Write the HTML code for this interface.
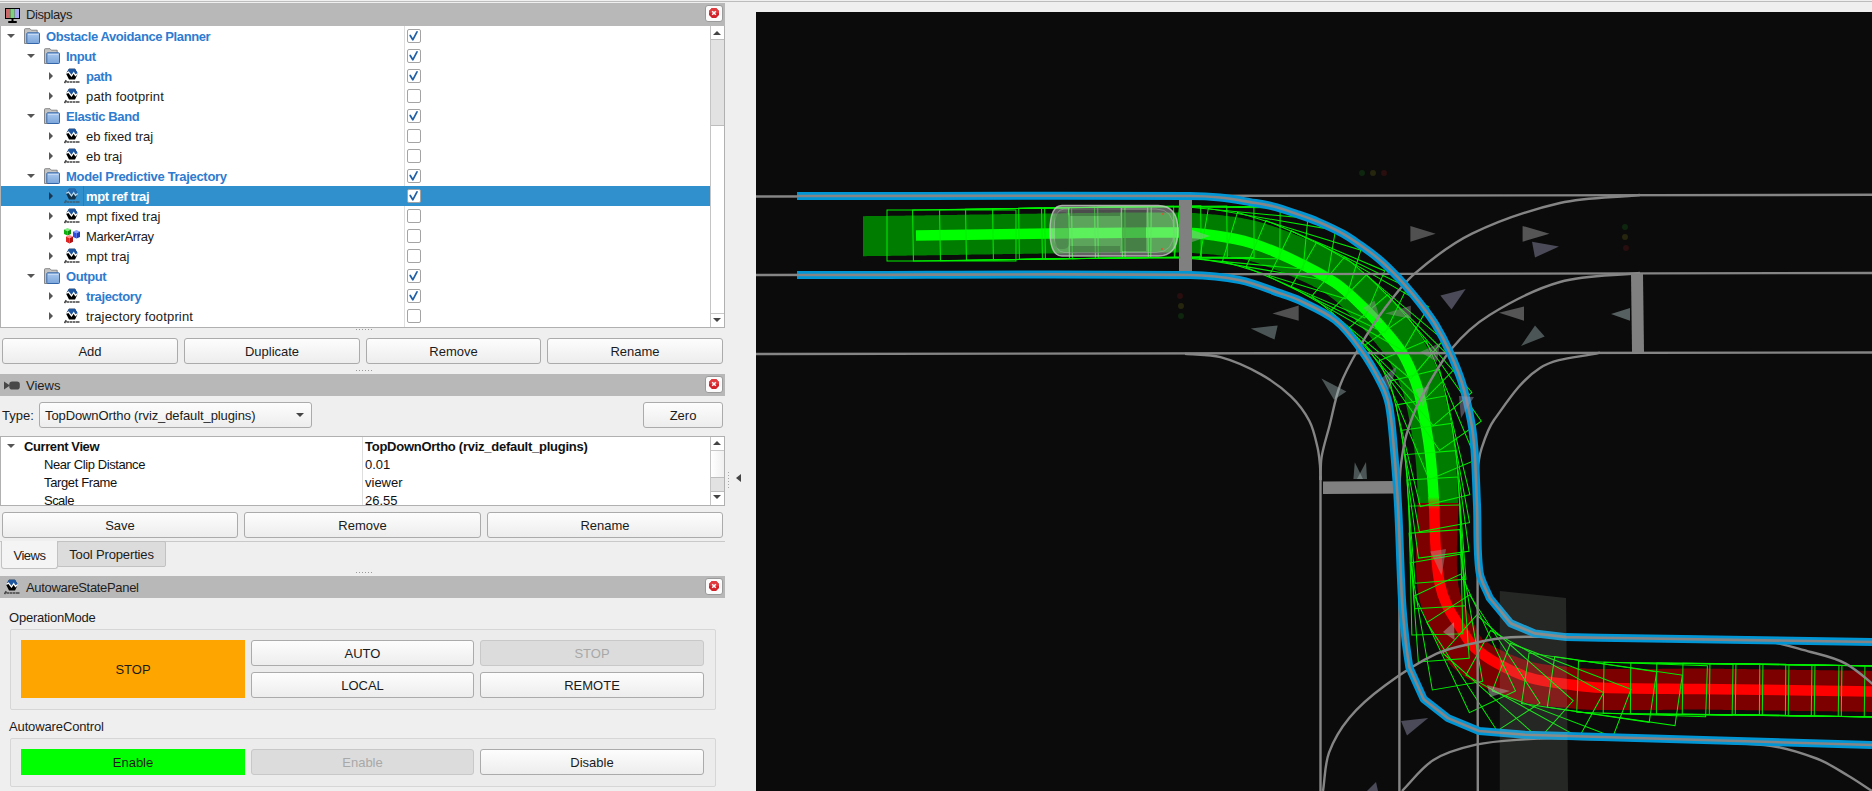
<!DOCTYPE html><html><head><meta charset="utf-8"><style>
*{margin:0;padding:0;box-sizing:border-box}
html,body{width:1872px;height:791px;overflow:hidden;background:#efefef;font-family:"Liberation Sans", sans-serif;font-size:13px;color:#1b1b1b}
.a{position:absolute}
.tb{position:absolute;left:0;width:725px;height:22px;background:#b8b8b8}
.tb .t{position:absolute;left:26px;top:4px;font-size:13px;line-height:16px;color:#1e1e1e}
.cl{position:absolute;left:705px;top:3px;width:18px;height:17px;background:#fbfbfb;border:1px solid #9a9a9a;border-radius:3px}
.btn{position:absolute;height:26px;border:1px solid #ababab;border-radius:3px;background:linear-gradient(#fdfdfd,#ededed);text-align:center;line-height:26px;font-size:13px;color:#1b1b1b}
.dis{background:#dcdcdc;color:#a8a8a8;border-color:#c8c8c8}
.row{position:absolute;left:1px;width:709px;height:20px;line-height:20px;white-space:nowrap}
.b{font-weight:bold;letter-spacing:-0.4px}
.bl{color:#2e7bcf}
.cb{position:absolute;left:407px;width:14px;height:14px;border:1px solid #a4a4a4;border-radius:2px;background:#fff}
.dots{position:absolute;height:1px;width:16px;background:repeating-linear-gradient(90deg,#9a9a9a 0 1px,transparent 1px 3px)}
</style></head><body>
<svg width="0" height="0" style="position:absolute">
<defs>
<symbol id="aw" viewBox="0 0 16 18">
 <polygon points="5,2.8 11,2.8 13.8,7.8 11,13.4 5,13.4 2.1,7.8" fill="#000"/>
 <polygon points="5,2.8 11,2.8 13.8,7.6 11.5,9.3 9.7,6.5 7.5,9.8 4.5,5.8 2.1,7.2" fill="#1f56a0"/>
 <polyline points="2.3,7.4 4.5,6 7.5,10 9.7,6.7 11.5,9.5 13.8,7.6" fill="none" stroke="#fff" stroke-width="1.3"/>
 <path d="M0.5,17 L2.3,14.3 M2.5,16 h2.5 M5.5,16 h2.5 M8.5,16 h3 M12,16 h3.5" stroke="#444" stroke-width="1.6"/>
</symbol>
<symbol id="fold" viewBox="0 0 16 16">
 <linearGradient id="fg" x1="0" y1="0" x2="0" y2="1"><stop offset="0" stop-color="#a9c8ee"/><stop offset="1" stop-color="#7ba5da"/></linearGradient>
 <path d="M0.5,15.5 V1.5 Q0.5,0.7 1.3,0.7 H6 L7.3,2.2 H13.2 V15.5 Z" fill="#c4c4c4" stroke="#7d7d7d" stroke-width="0.9"/>
 <rect x="2.8" y="4.8" width="12.7" height="10.7" rx="0.8" fill="url(#fg)" stroke="#3465a8" stroke-width="1"/>
 <rect x="4" y="6" width="10.3" height="1" fill="#d2e2f6" opacity="0.7"/>
</symbol>
<symbol id="chk" viewBox="0 0 14 14">
 <path d="M3.2,6.5 L5.8,10.8 L10,2.8" fill="none" stroke="#1e5fa8" stroke-width="1.7" stroke-linecap="round" stroke-linejoin="round"/>
</symbol>
<symbol id="xx" viewBox="0 0 16 15">
 <polygon points="5.9,2 10.1,2 13,4.9 13,9.1 10.1,12 5.9,12 3,9.1 3,4.9" fill="#d3232a"/>
 <polygon points="5.9,2 10.1,2 13,4.9 13,7 3,7 3,4.9" fill="#e03c40"/>
 <path d="M6.2,5.2 L9.8,8.8 M9.8,5.2 L6.2,8.8" stroke="#fff" stroke-width="1.5"/>
</symbol>
<symbol id="mk" viewBox="0 0 16 18">
 <g id="cube">
 </g>
 <polygon points="3.5,2 7,3.6 3.5,5.2 0,3.6" fill="#7ef07e"/><polygon points="0,3.6 3.5,5.2 3.5,9.6 0,8" fill="#10b010"/><polygon points="3.5,5.2 7,3.6 7,8 3.5,9.6" fill="#0a900a"/>
 <polygon points="12.5,4 16,5.6 12.5,7.2 9,5.6" fill="#8aa0ff"/><polygon points="9,5.6 12.5,7.2 12.5,12.6 9,11" fill="#2a4ee8"/><polygon points="12.5,7.2 16,5.6 16,11 12.5,12.6" fill="#1a3ac0"/>
 <polygon points="5.5,9 9,10.6 5.5,12.2 2,10.6" fill="#ff8a8a"/><polygon points="2,10.6 5.5,12.2 5.5,17.4 2,15.8" fill="#e02424"/><polygon points="5.5,12.2 9,10.6 9,15.8 5.5,17.4" fill="#b01010"/>
</symbol>
</defs></svg>
<div class="a" style="left:0;top:1px;width:1872px;height:1px;background:#bcbcbc"></div><div class="tb" style="top:3px;height:23px"><svg class="a" style="left:4px;top:4px" width="17" height="17" viewBox="0 0 17 17"><rect x="1" y="1" width="15" height="11" fill="#000"/><rect x="2" y="2" width="4.3" height="9" fill="#c86868"/><rect x="6.3" y="2" width="4.4" height="9" fill="#7fcf7f"/><rect x="10.7" y="2" width="4.3" height="9" fill="#a8a8f0"/><rect x="7.5" y="12" width="2" height="2" fill="#000"/><rect x="4" y="14" width="9" height="2" rx="1" fill="#000"/></svg><div class="t"><span style="letter-spacing:-0.39px">Displays</span></div><div class="cl" style="top:2px"><svg width="16" height="15" style="position:absolute;left:0;top:0"><use href="#xx"/></svg></div></div><div class="a" style="left:0;top:26px;width:725px;height:302px;background:#fff;border:1px solid #b0b0b0;border-top:none"></div><div class="a" style="left:404px;top:26px;width:1px;height:301px;background:#dedede"></div><svg class="a" style="left:6px;top:33px" width="10" height="6"><polygon points="1,1 9,1 5,5" fill="#555"/></svg><svg class="a" style="left:24px;top:28px" width="16" height="16"><use href="#fold"/></svg><div class="a b bl" style="left:46px;top:27px;line-height:20px;white-space:nowrap;">Obstacle Avoidance Planner</div><div class="cb" style="top:29px"></div><svg class="a" style="left:407px;top:29px" width="14" height="14"><use href="#chk"/></svg><svg class="a" style="left:26px;top:53px" width="10" height="6"><polygon points="1,1 9,1 5,5" fill="#555"/></svg><svg class="a" style="left:44px;top:48px" width="16" height="16"><use href="#fold"/></svg><div class="a b bl" style="left:66px;top:47px;line-height:20px;white-space:nowrap;">Input</div><div class="cb" style="top:49px"></div><svg class="a" style="left:407px;top:49px" width="14" height="14"><use href="#chk"/></svg><svg class="a" style="left:48px;top:71px" width="6" height="10"><polygon points="1,1 5,5 1,9" fill="#555"/></svg><svg class="a" style="left:64px;top:66px" width="16" height="18"><use href="#aw"/></svg><div class="a b bl" style="left:86px;top:67px;line-height:20px;white-space:nowrap;">path</div><div class="cb" style="top:69px"></div><svg class="a" style="left:407px;top:69px" width="14" height="14"><use href="#chk"/></svg><svg class="a" style="left:48px;top:91px" width="6" height="10"><polygon points="1,1 5,5 1,9" fill="#555"/></svg><svg class="a" style="left:64px;top:86px" width="16" height="18"><use href="#aw"/></svg><div class="a " style="left:86px;top:87px;line-height:20px;white-space:nowrap;"><span style="letter-spacing:0.15px">path footprint</span></div><div class="cb" style="top:89px"></div><svg class="a" style="left:26px;top:113px" width="10" height="6"><polygon points="1,1 9,1 5,5" fill="#555"/></svg><svg class="a" style="left:44px;top:108px" width="16" height="16"><use href="#fold"/></svg><div class="a b bl" style="left:66px;top:107px;line-height:20px;white-space:nowrap;">Elastic Band</div><div class="cb" style="top:109px"></div><svg class="a" style="left:407px;top:109px" width="14" height="14"><use href="#chk"/></svg><svg class="a" style="left:48px;top:131px" width="6" height="10"><polygon points="1,1 5,5 1,9" fill="#555"/></svg><svg class="a" style="left:64px;top:126px" width="16" height="18"><use href="#aw"/></svg><div class="a " style="left:86px;top:127px;line-height:20px;white-space:nowrap;">eb fixed traj</div><div class="cb" style="top:129px"></div><svg class="a" style="left:48px;top:151px" width="6" height="10"><polygon points="1,1 5,5 1,9" fill="#555"/></svg><svg class="a" style="left:64px;top:146px" width="16" height="18"><use href="#aw"/></svg><div class="a " style="left:86px;top:147px;line-height:20px;white-space:nowrap;">eb traj</div><div class="cb" style="top:149px"></div><svg class="a" style="left:26px;top:173px" width="10" height="6"><polygon points="1,1 9,1 5,5" fill="#555"/></svg><svg class="a" style="left:44px;top:168px" width="16" height="16"><use href="#fold"/></svg><div class="a b bl" style="left:66px;top:167px;line-height:20px;white-space:nowrap;"><span style="letter-spacing:-0.31px">Model Predictive Trajectory</span></div><div class="cb" style="top:169px"></div><svg class="a" style="left:407px;top:169px" width="14" height="14"><use href="#chk"/></svg><div class="a" style="left:1px;top:186px;width:709px;height:20px;background:#3090ce"></div><div class="a" style="left:83px;top:186px;width:1px;height:20px;background:#2c7cb6"></div><svg class="a" style="left:48px;top:191px" width="6" height="10"><polygon points="1,1 5,5 1,9" fill="#1a3550"/></svg><svg class="a" style="left:64px;top:186px" width="16" height="18"><use href="#aw"/></svg><div class="a b" style="left:86px;top:187px;line-height:20px;white-space:nowrap;color:#fff;">mpt ref traj</div><div class="a" style="left:64px;top:186px;width:16px;height:18px;background:#3090ce;opacity:0.35"></div><div class="cb" style="top:189px"></div><svg class="a" style="left:407px;top:189px" width="14" height="14"><use href="#chk"/></svg><svg class="a" style="left:48px;top:211px" width="6" height="10"><polygon points="1,1 5,5 1,9" fill="#555"/></svg><svg class="a" style="left:64px;top:206px" width="16" height="18"><use href="#aw"/></svg><div class="a " style="left:86px;top:207px;line-height:20px;white-space:nowrap;">mpt fixed traj</div><div class="cb" style="top:209px"></div><svg class="a" style="left:48px;top:231px" width="6" height="10"><polygon points="1,1 5,5 1,9" fill="#555"/></svg><svg class="a" style="left:64px;top:226px" width="16" height="18"><use href="#mk"/></svg><div class="a " style="left:86px;top:227px;line-height:20px;white-space:nowrap;"><span style="letter-spacing:-0.34px">MarkerArray</span></div><div class="cb" style="top:229px"></div><svg class="a" style="left:48px;top:251px" width="6" height="10"><polygon points="1,1 5,5 1,9" fill="#555"/></svg><svg class="a" style="left:64px;top:246px" width="16" height="18"><use href="#aw"/></svg><div class="a " style="left:86px;top:247px;line-height:20px;white-space:nowrap;">mpt traj</div><div class="cb" style="top:249px"></div><svg class="a" style="left:26px;top:273px" width="10" height="6"><polygon points="1,1 9,1 5,5" fill="#555"/></svg><svg class="a" style="left:44px;top:268px" width="16" height="16"><use href="#fold"/></svg><div class="a b bl" style="left:66px;top:267px;line-height:20px;white-space:nowrap;">Output</div><div class="cb" style="top:269px"></div><svg class="a" style="left:407px;top:269px" width="14" height="14"><use href="#chk"/></svg><svg class="a" style="left:48px;top:291px" width="6" height="10"><polygon points="1,1 5,5 1,9" fill="#555"/></svg><svg class="a" style="left:64px;top:286px" width="16" height="18"><use href="#aw"/></svg><div class="a b bl" style="left:86px;top:287px;line-height:20px;white-space:nowrap;">trajectory</div><div class="cb" style="top:289px"></div><svg class="a" style="left:407px;top:289px" width="14" height="14"><use href="#chk"/></svg><svg class="a" style="left:48px;top:311px" width="6" height="10"><polygon points="1,1 5,5 1,9" fill="#555"/></svg><svg class="a" style="left:64px;top:306px" width="16" height="18"><use href="#aw"/></svg><div class="a " style="left:86px;top:307px;line-height:20px;white-space:nowrap;"><span style="letter-spacing:0.15px">trajectory footprint</span></div><div class="cb" style="top:309px"></div><div class="a" style="left:710px;top:26px;width:15px;height:301px;background:#fff;border-left:1px solid #c4c4c4;border-right:1px solid #b0b0b0"></div><div class="a" style="left:711px;top:39px;width:13px;height:87px;background:#e2e2e2;border-top:1px solid #bdbdbd;border-bottom:1px solid #bdbdbd"></div><div class="a" style="left:711px;top:313px;width:13px;height:1px;background:#c8c8c8"></div><svg class="a" style="left:712px;top:30px" width="10" height="6"><polygon points="1,5 9,5 5,1" fill="#444"/></svg><svg class="a" style="left:712px;top:317px" width="10" height="6"><polygon points="1,1 9,1 5,5" fill="#444"/></svg><div class="dots" style="left:356px;top:329px"></div><div class="btn" style="left:2px;top:338px;width:176px">Add</div><div class="btn" style="left:184px;top:338px;width:176px">Duplicate</div><div class="btn" style="left:366px;top:338px;width:175px">Remove</div><div class="btn" style="left:547px;top:338px;width:176px">Rename</div><div class="dots" style="left:356px;top:370px"></div><div class="tb" style="top:374px"><svg class="a" style="left:4px;top:7px" width="17" height="11" viewBox="0 0 17 11"><polygon points="0,0.5 6,4.5 0,8.5" fill="#484848"/><rect x="5.3" y="0.5" width="10.5" height="8" rx="2.8" fill="#484848"/></svg><div class="t">Views</div><div class="cl" style="top:2px"><svg width="16" height="15" style="position:absolute;left:0;top:0"><use href="#xx"/></svg></div></div><div class="a" style="left:2px;top:407px;line-height:18px">Type:</div><div class="btn" style="left:39px;top:402px;width:273px;height:26px;text-align:left;padding-left:5px;line-height:26px"><span style="letter-spacing:-0.1px">TopDownOrtho (rviz_default_plugins)</span></div><svg class="a" style="left:295px;top:412px" width="10" height="6"><polygon points="1,1 9,1 5,5" fill="#444"/></svg><div class="btn" style="left:643px;top:402px;width:80px;height:26px">Zero</div><div class="a" style="left:0;top:436px;width:725px;height:70px;background:#fff;border:1px solid #b0b0b0"></div><div class="a" style="left:362px;top:437px;width:1px;height:68px;background:#dedede"></div><svg class="a" style="left:6px;top:443px" width="10" height="6"><polygon points="1,1 9,1 5,5" fill="#555"/></svg><div class="a" style="left:1px;top:437px;width:709px;height:68px;overflow:hidden"><div class="a b" style="left:23px;top:1px;line-height:18px;white-space:nowrap;color:#111">Current View</div><div class="a b" style="left:364px;top:1px;line-height:18px;white-space:nowrap;color:#111"><span style="letter-spacing:-0.26px">TopDownOrtho (rviz_default_plugins)</span></div><div class="a " style="left:43px;top:19px;line-height:18px;white-space:nowrap;color:#111"><span style="letter-spacing:-0.41px">Near Clip Distance</span></div><div class="a " style="left:364px;top:19px;line-height:18px;white-space:nowrap;color:#111">0.01</div><div class="a " style="left:43px;top:37px;line-height:18px;white-space:nowrap;color:#111"><span style="letter-spacing:-0.37px">Target Frame</span></div><div class="a " style="left:364px;top:37px;line-height:18px;white-space:nowrap;color:#111">viewer</div><div class="a " style="left:43px;top:55px;line-height:18px;white-space:nowrap;color:#111"><span style="letter-spacing:-0.54px">Scale</span></div><div class="a " style="left:364px;top:55px;line-height:18px;white-space:nowrap;color:#111">26.55</div></div><div class="a" style="left:710px;top:437px;width:15px;height:68px;background:#fff;border-left:1px solid #c4c4c4;border-right:1px solid #b0b0b0"></div><div class="a" style="left:711px;top:450px;width:13px;height:1px;background:#c8c8c8"></div><div class="a" style="left:711px;top:451px;width:13px;height:26px;background:linear-gradient(90deg,#fff,#f0f0f0)"></div><div class="a" style="left:711px;top:477px;width:13px;height:15px;background:#e2e2e2;border-top:1px solid #bdbdbd;border-bottom:1px solid #bdbdbd"></div><svg class="a" style="left:712px;top:440px" width="10" height="6"><polygon points="1,5 9,5 5,1" fill="#444"/></svg><svg class="a" style="left:712px;top:494px" width="10" height="6"><polygon points="1,1 9,1 5,5" fill="#444"/></svg><div class="btn" style="left:2px;top:512px;width:236px">Save</div><div class="btn" style="left:244px;top:512px;width:237px">Remove</div><div class="btn" style="left:487px;top:512px;width:236px">Rename</div><div class="a" style="left:0;top:541px;width:725px;height:1px;background:#c9c9c9"></div><div class="a" style="left:57px;top:541px;width:109px;height:26px;background:#dcdcdc;border:1px solid #c2c2c2;border-radius:2px;text-align:center;line-height:26px"><span style="letter-spacing:-0.14px">Tool Properties</span></div><div class="a" style="left:1px;top:541px;width:57px;height:28px;background:#f4f4f4;border:1px solid #c2c2c2;border-top:none;border-radius:0 0 3px 3px;text-align:center;line-height:30px"><span style="letter-spacing:-0.52px">Views</span></div><div class="dots" style="left:356px;top:572px"></div><div class="tb" style="top:576px"><svg class="a" style="left:4px;top:1px" width="16" height="18"><use href="#aw"/></svg><div class="t"><span style="letter-spacing:-0.33px">AutowareStatePanel</span></div><div class="cl" style="top:2px"><svg width="16" height="15" style="position:absolute;left:0;top:0"><use href="#xx"/></svg></div></div><div class="a" style="left:9px;top:609px;line-height:18px"><span style="letter-spacing:-0.23px">OperationMode</span></div><div class="a" style="left:10px;top:629px;width:706px;height:81px;border:1px solid #d6d6d6;border-radius:2px;background:#ececec"></div><div class="a" style="left:21px;top:640px;width:224px;height:58px;background:#ffa500;text-align:center;line-height:60px">STOP</div><div class="btn" style="left:251px;top:640px;width:223px;height:26px">AUTO</div><div class="btn dis" style="left:480px;top:640px;width:224px;height:26px">STOP</div><div class="btn" style="left:251px;top:672px;width:223px;height:26px">LOCAL</div><div class="btn" style="left:480px;top:672px;width:224px;height:26px">REMOTE</div><div class="a" style="left:9px;top:718px;line-height:18px"><span style="letter-spacing:-0.13px">AutowareControl</span></div><div class="a" style="left:10px;top:738px;width:706px;height:49px;border:1px solid #d6d6d6;border-radius:2px;background:#ececec"></div><div class="a" style="left:21px;top:749px;width:224px;height:26px;background:#00ff00;text-align:center;line-height:28px">Enable</div><div class="btn dis" style="left:251px;top:749px;width:223px;height:26px">Enable</div><div class="btn" style="left:480px;top:749px;width:224px;height:26px">Disable</div><svg class="a" style="left:735px;top:473px" width="8" height="10"><polygon points="6,1 6,9 1,5" fill="#444"/></svg><div class="a" style="left:728px;top:472px;width:1px;height:16px;background:repeating-linear-gradient(#a8a8a8 0 1px,transparent 1px 3px)"></div><svg class="a" style="left:756px;top:12px" width="1116" height="779" viewBox="756 12 1116 779"><defs><clipPath id="cg"><rect x="756" y="12" width="1116" height="491"/></clipPath><clipPath id="crd"><rect x="756" y="503" width="1116" height="300"/></clipPath></defs><defs><linearGradient id="grd" gradientUnits="userSpaceOnUse" x1="0" y1="497" x2="0" y2="509"><stop offset="0" stop-color="#00ff00"/><stop offset="1" stop-color="#ff0000"/></linearGradient><clipPath id="cmid"><rect x="1380" y="497" width="100" height="12"/></clipPath></defs><rect x="756" y="12" width="1116" height="779" fill="#0b0b0b"/><circle cx="1362" cy="173" r="3" fill="#0e260e"/><circle cx="1373" cy="173" r="3" fill="#26260e"/><circle cx="1384" cy="173" r="3" fill="#280e0e"/><circle cx="1180" cy="296" r="3" fill="#280e0e"/><circle cx="1181" cy="306" r="3" fill="#26260e"/><circle cx="1181" cy="316" r="3" fill="#0e260e"/><circle cx="1625" cy="227" r="3" fill="#0e260e"/><circle cx="1625" cy="237" r="3" fill="#26260e"/><circle cx="1626" cy="248" r="3" fill="#280e0e"/><path d="M863.0,236.2 L865.0,236.2 L867.0,236.1 L869.0,236.1 L871.0,236.1 L873.0,236.1 L875.0,236.0 L877.0,236.0 L879.0,236.0 L881.0,236.0 L883.0,235.9 L885.0,235.9 L887.0,235.9 L889.0,235.9 L891.0,235.8 L893.0,235.8 L895.0,235.8 L897.0,235.8 L899.0,235.7 L901.0,235.7 L903.0,235.7 L905.0,235.7 L907.0,235.6 L909.0,235.6 L911.0,235.6 L913.0,235.5 L915.0,235.5 L917.0,235.5 L919.0,235.5 L921.0,235.4 L923.0,235.4 L925.0,235.4 L927.0,235.3 L929.0,235.3 L931.0,235.3 L933.0,235.2 L935.0,235.2 L937.0,235.2 L939.0,235.2 L941.0,235.1 L943.0,235.1 L945.0,235.1 L947.0,235.0 L949.0,235.0 L951.0,235.0 L953.0,234.9 L955.0,234.9 L957.0,234.9 L959.0,234.8 L961.0,234.8 L963.0,234.8 L965.0,234.7 L967.0,234.7 L969.0,234.7 L971.0,234.6 L973.0,234.6 L975.0,234.6 L977.0,234.5 L979.0,234.5 L981.0,234.5 L983.0,234.4 L985.0,234.4 L987.0,234.4 L989.0,234.4 L991.0,234.3 L993.0,234.3 L995.0,234.3 L997.0,234.2 L999.0,234.2 L1001.0,234.2 L1003.0,234.1 L1005.0,234.1 L1007.0,234.1 L1009.0,234.0 L1011.0,234.0 L1013.0,234.0 L1015.0,234.0 L1017.0,233.9 L1019.0,233.9 L1021.0,233.9 L1023.0,233.8 L1025.0,233.8 L1027.0,233.8 L1029.0,233.8 L1031.0,233.7 L1033.0,233.7 L1035.0,233.7 L1037.0,233.7 L1039.0,233.6 L1041.0,233.6 L1043.0,233.6 L1045.0,233.6 L1047.0,233.5 L1049.0,233.5 L1051.0,233.5 L1053.0,233.5 L1055.0,233.4 L1057.0,233.4 L1059.0,233.4 L1061.0,233.4 L1063.0,233.3 L1065.0,233.3 L1067.0,233.3 L1069.0,233.3 L1071.0,233.2 L1073.0,233.2 L1075.0,233.2 L1077.0,233.1 L1079.0,233.1 L1081.0,233.1 L1083.0,233.1 L1085.0,233.0 L1087.0,233.0 L1089.0,233.0 L1091.0,232.9 L1093.0,232.9 L1095.0,232.9 L1097.0,232.9 L1099.0,232.8 L1101.0,232.8 L1103.0,232.8 L1105.0,232.7 L1107.0,232.7 L1109.0,232.7 L1111.0,232.7 L1113.0,232.6 L1115.0,232.6 L1117.0,232.6 L1119.0,232.6 L1121.0,232.6 L1123.0,232.5 L1125.0,232.5 L1127.0,232.5 L1129.0,232.5 L1131.0,232.5 L1133.0,232.4 L1135.0,232.4 L1137.0,232.4 L1139.0,232.4 L1141.0,232.4 L1143.0,232.4 L1145.0,232.4 L1147.0,232.4 L1149.0,232.4 L1151.0,232.4 L1153.0,232.4 L1155.0,232.4 L1157.0,232.4 L1159.0,232.4 L1161.0,232.4 L1163.0,232.4 L1165.0,232.4 L1167.0,232.4 L1169.0,232.4 L1171.0,232.4 L1173.0,232.4 L1175.0,232.4 L1177.0,232.5 L1179.0,232.5 L1181.0,232.5 L1183.0,232.6 L1185.0,232.6 L1187.0,232.7 L1189.0,232.8 L1191.0,232.9 L1193.0,233.0 L1195.0,233.2 L1196.9,233.4 L1198.9,233.5 L1200.9,233.6 L1202.9,233.8 L1204.9,233.9 L1206.9,234.0 L1208.9,234.2 L1210.9,234.4 L1212.9,234.5 L1214.9,234.7 L1216.9,234.9 L1218.9,235.1 L1220.9,235.4 L1222.9,235.6 L1224.9,235.8 L1226.9,236.1 L1228.9,236.3 L1230.9,236.6 L1232.9,236.9 L1234.9,237.2 L1236.9,237.5 L1238.8,237.9 L1240.8,238.3 L1242.8,238.6 L1244.8,239.1 L1246.8,239.5 L1248.8,240.0 L1250.7,240.4 L1252.7,241.0 L1254.7,241.5 L1256.6,242.0 L1258.5,242.6 L1260.5,243.2 L1262.4,243.8 L1264.4,244.4 L1266.3,245.0 L1268.2,245.7 L1270.1,246.3 L1272.0,247.0 L1273.9,247.7 L1275.8,248.4 L1277.7,249.1 L1279.6,249.8 L1281.5,250.5 L1283.4,251.3 L1285.3,252.0 L1287.1,252.8 L1289.0,253.5 L1290.9,254.3 L1292.7,255.1 L1294.6,255.9 L1296.4,256.7 L1298.3,257.5 L1300.1,258.2 L1302.0,259.0 L1303.8,259.9 L1305.7,260.7 L1307.5,261.5 L1309.4,262.3 L1311.2,263.2 L1313.0,264.0 L1314.9,264.9 L1316.7,265.7 L1318.5,266.6 L1320.4,267.5 L1322.2,268.4 L1324.0,269.4 L1325.9,270.3 L1327.7,271.2 L1329.5,272.2 L1331.2,273.3 L1333.0,274.4 L1334.7,275.5 L1336.4,276.6 L1338.1,277.8 L1339.9,279.0 L1341.5,280.2 L1343.2,281.5 L1344.9,282.8 L1346.6,284.1 L1348.1,285.4 L1349.7,286.8 L1351.3,288.2 L1352.8,289.5 L1354.3,291.0 L1355.8,292.4 L1357.2,293.8 L1358.7,295.2 L1360.1,296.6 L1361.6,298.0 L1363.0,299.4 L1364.4,300.8 L1365.8,302.3 L1367.3,303.7 L1368.7,305.1 L1370.1,306.6 L1371.5,308.1 L1372.9,309.6 L1374.3,311.1 L1375.7,312.6 L1377.1,314.1 L1378.4,315.6 L1379.8,317.1 L1381.1,318.6 L1382.4,320.2 L1383.7,321.7 L1385.0,323.2 L1386.3,324.8 L1387.6,326.3 L1388.9,327.9 L1390.2,329.4 L1391.5,331.0 L1392.8,332.5 L1394.0,334.1 L1395.3,335.7 L1396.6,337.2 L1397.9,338.9 L1399.1,340.5 L1400.3,342.1 L1401.5,343.8 L1402.8,345.5 L1403.9,347.3 L1405.1,349.0 L1406.2,350.8 L1407.2,352.6 L1408.3,354.4 L1409.3,356.2 L1410.3,358.1 L1411.2,359.9 L1412.1,361.8 L1413.0,363.6 L1413.9,365.5 L1414.7,367.4 L1415.5,369.3 L1416.3,371.1 L1417.1,373.0 L1417.8,374.9 L1418.6,376.8 L1419.3,378.7 L1420.0,380.6 L1420.7,382.6 L1421.4,384.5 L1422.1,386.5 L1422.7,388.5 L1423.2,390.4 L1423.8,392.4 L1424.3,394.4 L1424.8,396.4 L1425.3,398.4 L1425.7,400.5 L1426.1,402.4 L1426.6,404.4 L1427.0,406.4 L1427.4,408.3 L1427.8,410.3 L1428.2,412.3 L1428.6,414.2 L1428.9,416.2 L1429.3,418.2 L1429.7,420.2 L1430.1,422.2 L1430.4,424.1 L1430.8,426.1 L1431.2,428.1 L1431.5,430.1 L1431.9,432.1 L1432.2,434.1 L1432.5,436.0 L1432.9,438.0 L1433.2,440.0 L1433.5,442.0 L1433.8,444.0 L1434.1,446.0 L1434.4,448.0 L1434.6,450.0 L1434.9,452.0 L1435.2,454.0 L1435.4,456.1 L1435.6,458.1 L1435.7,460.1 L1435.9,462.1 L1436.1,464.1 L1436.2,466.1 L1436.4,468.1 L1436.5,470.2 L1436.6,472.2 L1436.7,474.2 L1436.9,476.2 L1437.0,478.2 L1437.1,480.2 L1437.2,482.2 L1437.3,484.2 L1437.4,486.2 L1437.4,488.2 L1437.5,490.2 L1437.6,492.2 L1437.7,494.2 L1437.8,496.2 L1437.8,498.2 L1437.9,500.2 L1438.0,502.2 L1438.1,504.3 L1438.0,506.3 L1438.0,508.3 L1437.9,510.3 L1437.8,512.4 L1437.7,514.4 L1437.6,516.4 L1437.5,518.4 L1437.4,520.4 L1437.3,522.4 L1437.2,524.4 L1437.1,526.4 L1437.0,528.4 L1436.9,530.4 L1436.8,532.4 L1436.7,534.4 L1436.6,536.4 L1436.6,538.4 L1436.5,540.4 L1436.5,542.4 L1436.5,544.4 L1436.4,546.4 L1436.4,548.4 L1436.4,550.4 L1436.4,552.4 L1436.4,554.4 L1436.4,556.4 L1436.4,558.4 L1436.4,560.4 L1436.4,562.4 L1436.4,564.5 L1436.4,566.5 L1436.5,568.5 L1436.6,570.5 L1436.7,572.5 L1436.8,574.5 L1436.9,576.5 L1437.0,578.6 L1437.2,580.6 L1437.4,582.6 L1437.6,584.6 L1437.9,586.7 L1438.2,588.7 L1438.5,590.8 L1438.9,592.8 L1439.4,594.8 L1439.8,596.8 L1440.4,598.9 L1440.9,600.9 L1441.5,602.9 L1442.2,604.8 L1442.9,606.8 L1443.6,608.8 L1444.4,610.8 L1445.3,612.7 L1446.1,614.6 L1447.0,616.5 L1447.9,618.4 L1448.9,620.2 L1449.9,622.1 L1450.8,623.9 L1451.8,625.6 L1452.7,627.4 L1453.7,629.2 L1454.6,630.9 L1455.5,632.6 L1456.3,634.3 L1457.1,636.0 L1458.0,637.8 L1458.9,639.7 L1459.8,641.6 L1460.8,643.6 L1461.9,645.5 L1463.2,647.5 L1464.5,649.5 L1466.0,651.4 L1467.7,653.4 L1469.4,654.8 L1471.1,656.1 L1472.9,657.4 L1474.7,658.7 L1476.5,659.9 L1478.3,661.1 L1480.1,662.2 L1482.0,663.3 L1483.8,664.4 L1485.7,665.4 L1487.5,666.4 L1489.5,667.4 L1491.3,668.3 L1493.2,669.2 L1495.1,670.1 L1497.0,670.9 L1498.9,671.8 L1500.7,672.6 L1502.6,673.4 L1504.5,674.2 L1506.4,675.0 L1508.4,675.7 L1510.3,676.5 L1512.2,677.2 L1514.2,677.9 L1516.1,678.6 L1518.1,679.2 L1520.1,679.8 L1522.1,680.4 L1524.1,681.0 L1526.0,681.6 L1528.1,682.1 L1530.1,682.6 L1532.1,683.1 L1534.2,683.5 L1536.3,683.9 L1538.3,684.3 L1540.3,684.6 L1542.4,684.9 L1544.4,685.2 L1546.4,685.4 L1548.5,685.6 L1550.5,685.8 L1552.5,686.0 L1554.5,686.2 L1556.5,686.3 L1558.5,686.5 L1560.5,686.7 L1562.5,686.8 L1564.4,687.0 L1566.4,687.2 L1568.4,687.4 L1570.4,687.7 L1572.4,687.9 L1574.4,688.1 L1576.4,688.3 L1578.4,688.5 L1580.4,688.7 L1582.4,688.8 L1584.4,689.0 L1586.4,689.1 L1588.5,689.2 L1590.5,689.3 L1592.5,689.4 L1594.6,689.4 L1596.6,689.4 L1598.6,689.5 L1600.6,689.5 L1602.6,689.5 L1604.6,689.5 L1606.6,689.6 L1608.6,689.6 L1610.6,689.6 L1612.6,689.6 L1614.6,689.6 L1616.6,689.6 L1618.6,689.6 L1620.6,689.6 L1622.6,689.6 L1624.6,689.6 L1626.6,689.6 L1628.6,689.6 L1630.6,689.6 L1632.6,689.6 L1634.6,689.6 L1636.6,689.6 L1638.6,689.6 L1640.6,689.6 L1642.6,689.5 L1644.6,689.5 L1646.6,689.5 L1648.6,689.5 L1650.6,689.5 L1652.6,689.5 L1654.6,689.4 L1656.6,689.4 L1658.6,689.4 L1660.6,689.4 L1662.6,689.3 L1664.6,689.3 L1666.6,689.3 L1668.6,689.3 L1670.6,689.3 L1672.6,689.2 L1674.6,689.2 L1676.6,689.2 L1678.6,689.2 L1680.6,689.2 L1682.6,689.1 L1684.6,689.1 L1686.6,689.1 L1688.6,689.1 L1690.6,689.1 L1692.6,689.1 L1694.6,689.0 L1696.6,689.0 L1698.6,689.0 L1700.6,689.0 L1702.6,689.0 L1704.6,689.1 L1706.6,689.1 L1708.6,689.1 L1710.6,689.2 L1712.6,689.2 L1714.6,689.2 L1716.6,689.2 L1718.6,689.3 L1720.6,689.3 L1722.6,689.3 L1724.6,689.4 L1726.6,689.4 L1728.6,689.4 L1730.6,689.4 L1732.6,689.5 L1734.6,689.5 L1736.6,689.5 L1738.6,689.5 L1740.6,689.6 L1742.6,689.6 L1744.6,689.6 L1746.6,689.7 L1748.6,689.7 L1750.6,689.7 L1752.6,689.7 L1754.6,689.8 L1756.6,689.8 L1758.6,689.8 L1760.6,689.9 L1762.6,689.9 L1764.6,689.9 L1766.6,689.9 L1768.6,690.0 L1770.6,690.0 L1772.6,690.0 L1774.6,690.0 L1776.6,690.1 L1778.6,690.1 L1780.6,690.1 L1782.6,690.2 L1784.6,690.2 L1786.6,690.2 L1788.6,690.2 L1790.6,690.3 L1792.6,690.3 L1794.6,690.3 L1796.6,690.4 L1798.6,690.4 L1800.6,690.4 L1802.6,690.4 L1804.6,690.5 L1806.6,690.5 L1808.6,690.5 L1810.6,690.5 L1812.6,690.6 L1814.6,690.6 L1816.6,690.6 L1818.6,690.7 L1820.6,690.7 L1822.6,690.7 L1824.6,690.7 L1826.6,690.8 L1828.6,690.8 L1830.6,690.8 L1832.6,690.8 L1834.6,690.9 L1836.6,690.9 L1838.6,690.9 L1840.6,691.0 L1842.6,691.0 L1844.6,691.0 L1846.6,691.0 L1848.6,691.1 L1850.6,691.1 L1852.6,691.1 L1854.6,691.1 L1856.6,691.2 L1858.6,691.2 L1860.6,691.2 L1862.6,691.3 L1864.6,691.3 L1866.6,691.3 L1868.6,691.3 L1870.6,691.4 L1872.6,691.4 L1874.6,691.4 L1876.6,691.5 L1878.6,691.5" fill="none" stroke="#007d00" stroke-width="40" clip-path="url(#cg)"/><path d="M863.0,236.2 L865.0,236.2 L867.0,236.1 L869.0,236.1 L871.0,236.1 L873.0,236.1 L875.0,236.0 L877.0,236.0 L879.0,236.0 L881.0,236.0 L883.0,235.9 L885.0,235.9 L887.0,235.9 L889.0,235.9 L891.0,235.8 L893.0,235.8 L895.0,235.8 L897.0,235.8 L899.0,235.7 L901.0,235.7 L903.0,235.7 L905.0,235.7 L907.0,235.6 L909.0,235.6 L911.0,235.6 L913.0,235.5 L915.0,235.5 L917.0,235.5 L919.0,235.5 L921.0,235.4 L923.0,235.4 L925.0,235.4 L927.0,235.3 L929.0,235.3 L931.0,235.3 L933.0,235.2 L935.0,235.2 L937.0,235.2 L939.0,235.2 L941.0,235.1 L943.0,235.1 L945.0,235.1 L947.0,235.0 L949.0,235.0 L951.0,235.0 L953.0,234.9 L955.0,234.9 L957.0,234.9 L959.0,234.8 L961.0,234.8 L963.0,234.8 L965.0,234.7 L967.0,234.7 L969.0,234.7 L971.0,234.6 L973.0,234.6 L975.0,234.6 L977.0,234.5 L979.0,234.5 L981.0,234.5 L983.0,234.4 L985.0,234.4 L987.0,234.4 L989.0,234.4 L991.0,234.3 L993.0,234.3 L995.0,234.3 L997.0,234.2 L999.0,234.2 L1001.0,234.2 L1003.0,234.1 L1005.0,234.1 L1007.0,234.1 L1009.0,234.0 L1011.0,234.0 L1013.0,234.0 L1015.0,234.0 L1017.0,233.9 L1019.0,233.9 L1021.0,233.9 L1023.0,233.8 L1025.0,233.8 L1027.0,233.8 L1029.0,233.8 L1031.0,233.7 L1033.0,233.7 L1035.0,233.7 L1037.0,233.7 L1039.0,233.6 L1041.0,233.6 L1043.0,233.6 L1045.0,233.6 L1047.0,233.5 L1049.0,233.5 L1051.0,233.5 L1053.0,233.5 L1055.0,233.4 L1057.0,233.4 L1059.0,233.4 L1061.0,233.4 L1063.0,233.3 L1065.0,233.3 L1067.0,233.3 L1069.0,233.3 L1071.0,233.2 L1073.0,233.2 L1075.0,233.2 L1077.0,233.1 L1079.0,233.1 L1081.0,233.1 L1083.0,233.1 L1085.0,233.0 L1087.0,233.0 L1089.0,233.0 L1091.0,232.9 L1093.0,232.9 L1095.0,232.9 L1097.0,232.9 L1099.0,232.8 L1101.0,232.8 L1103.0,232.8 L1105.0,232.7 L1107.0,232.7 L1109.0,232.7 L1111.0,232.7 L1113.0,232.6 L1115.0,232.6 L1117.0,232.6 L1119.0,232.6 L1121.0,232.6 L1123.0,232.5 L1125.0,232.5 L1127.0,232.5 L1129.0,232.5 L1131.0,232.5 L1133.0,232.4 L1135.0,232.4 L1137.0,232.4 L1139.0,232.4 L1141.0,232.4 L1143.0,232.4 L1145.0,232.4 L1147.0,232.4 L1149.0,232.4 L1151.0,232.4 L1153.0,232.4 L1155.0,232.4 L1157.0,232.4 L1159.0,232.4 L1161.0,232.4 L1163.0,232.4 L1165.0,232.4 L1167.0,232.4 L1169.0,232.4 L1171.0,232.4 L1173.0,232.4 L1175.0,232.4 L1177.0,232.5 L1179.0,232.5 L1181.0,232.5 L1183.0,232.6 L1185.0,232.6 L1187.0,232.7 L1189.0,232.8 L1191.0,232.9 L1193.0,233.0 L1195.0,233.2 L1196.9,233.4 L1198.9,233.5 L1200.9,233.6 L1202.9,233.8 L1204.9,233.9 L1206.9,234.0 L1208.9,234.2 L1210.9,234.4 L1212.9,234.5 L1214.9,234.7 L1216.9,234.9 L1218.9,235.1 L1220.9,235.4 L1222.9,235.6 L1224.9,235.8 L1226.9,236.1 L1228.9,236.3 L1230.9,236.6 L1232.9,236.9 L1234.9,237.2 L1236.9,237.5 L1238.8,237.9 L1240.8,238.3 L1242.8,238.6 L1244.8,239.1 L1246.8,239.5 L1248.8,240.0 L1250.7,240.4 L1252.7,241.0 L1254.7,241.5 L1256.6,242.0 L1258.5,242.6 L1260.5,243.2 L1262.4,243.8 L1264.4,244.4 L1266.3,245.0 L1268.2,245.7 L1270.1,246.3 L1272.0,247.0 L1273.9,247.7 L1275.8,248.4 L1277.7,249.1 L1279.6,249.8 L1281.5,250.5 L1283.4,251.3 L1285.3,252.0 L1287.1,252.8 L1289.0,253.5 L1290.9,254.3 L1292.7,255.1 L1294.6,255.9 L1296.4,256.7 L1298.3,257.5 L1300.1,258.2 L1302.0,259.0 L1303.8,259.9 L1305.7,260.7 L1307.5,261.5 L1309.4,262.3 L1311.2,263.2 L1313.0,264.0 L1314.9,264.9 L1316.7,265.7 L1318.5,266.6 L1320.4,267.5 L1322.2,268.4 L1324.0,269.4 L1325.9,270.3 L1327.7,271.2 L1329.5,272.2 L1331.2,273.3 L1333.0,274.4 L1334.7,275.5 L1336.4,276.6 L1338.1,277.8 L1339.9,279.0 L1341.5,280.2 L1343.2,281.5 L1344.9,282.8 L1346.6,284.1 L1348.1,285.4 L1349.7,286.8 L1351.3,288.2 L1352.8,289.5 L1354.3,291.0 L1355.8,292.4 L1357.2,293.8 L1358.7,295.2 L1360.1,296.6 L1361.6,298.0 L1363.0,299.4 L1364.4,300.8 L1365.8,302.3 L1367.3,303.7 L1368.7,305.1 L1370.1,306.6 L1371.5,308.1 L1372.9,309.6 L1374.3,311.1 L1375.7,312.6 L1377.1,314.1 L1378.4,315.6 L1379.8,317.1 L1381.1,318.6 L1382.4,320.2 L1383.7,321.7 L1385.0,323.2 L1386.3,324.8 L1387.6,326.3 L1388.9,327.9 L1390.2,329.4 L1391.5,331.0 L1392.8,332.5 L1394.0,334.1 L1395.3,335.7 L1396.6,337.2 L1397.9,338.9 L1399.1,340.5 L1400.3,342.1 L1401.5,343.8 L1402.8,345.5 L1403.9,347.3 L1405.1,349.0 L1406.2,350.8 L1407.2,352.6 L1408.3,354.4 L1409.3,356.2 L1410.3,358.1 L1411.2,359.9 L1412.1,361.8 L1413.0,363.6 L1413.9,365.5 L1414.7,367.4 L1415.5,369.3 L1416.3,371.1 L1417.1,373.0 L1417.8,374.9 L1418.6,376.8 L1419.3,378.7 L1420.0,380.6 L1420.7,382.6 L1421.4,384.5 L1422.1,386.5 L1422.7,388.5 L1423.2,390.4 L1423.8,392.4 L1424.3,394.4 L1424.8,396.4 L1425.3,398.4 L1425.7,400.5 L1426.1,402.4 L1426.6,404.4 L1427.0,406.4 L1427.4,408.3 L1427.8,410.3 L1428.2,412.3 L1428.6,414.2 L1428.9,416.2 L1429.3,418.2 L1429.7,420.2 L1430.1,422.2 L1430.4,424.1 L1430.8,426.1 L1431.2,428.1 L1431.5,430.1 L1431.9,432.1 L1432.2,434.1 L1432.5,436.0 L1432.9,438.0 L1433.2,440.0 L1433.5,442.0 L1433.8,444.0 L1434.1,446.0 L1434.4,448.0 L1434.6,450.0 L1434.9,452.0 L1435.2,454.0 L1435.4,456.1 L1435.6,458.1 L1435.7,460.1 L1435.9,462.1 L1436.1,464.1 L1436.2,466.1 L1436.4,468.1 L1436.5,470.2 L1436.6,472.2 L1436.7,474.2 L1436.9,476.2 L1437.0,478.2 L1437.1,480.2 L1437.2,482.2 L1437.3,484.2 L1437.4,486.2 L1437.4,488.2 L1437.5,490.2 L1437.6,492.2 L1437.7,494.2 L1437.8,496.2 L1437.8,498.2 L1437.9,500.2 L1438.0,502.2 L1438.1,504.3 L1438.0,506.3 L1438.0,508.3 L1437.9,510.3 L1437.8,512.4 L1437.7,514.4 L1437.6,516.4 L1437.5,518.4 L1437.4,520.4 L1437.3,522.4 L1437.2,524.4 L1437.1,526.4 L1437.0,528.4 L1436.9,530.4 L1436.8,532.4 L1436.7,534.4 L1436.6,536.4 L1436.6,538.4 L1436.5,540.4 L1436.5,542.4 L1436.5,544.4 L1436.4,546.4 L1436.4,548.4 L1436.4,550.4 L1436.4,552.4 L1436.4,554.4 L1436.4,556.4 L1436.4,558.4 L1436.4,560.4 L1436.4,562.4 L1436.4,564.5 L1436.4,566.5 L1436.5,568.5 L1436.6,570.5 L1436.7,572.5 L1436.8,574.5 L1436.9,576.5 L1437.0,578.6 L1437.2,580.6 L1437.4,582.6 L1437.6,584.6 L1437.9,586.7 L1438.2,588.7 L1438.5,590.8 L1438.9,592.8 L1439.4,594.8 L1439.8,596.8 L1440.4,598.9 L1440.9,600.9 L1441.5,602.9 L1442.2,604.8 L1442.9,606.8 L1443.6,608.8 L1444.4,610.8 L1445.3,612.7 L1446.1,614.6 L1447.0,616.5 L1447.9,618.4 L1448.9,620.2 L1449.9,622.1 L1450.8,623.9 L1451.8,625.6 L1452.7,627.4 L1453.7,629.2 L1454.6,630.9 L1455.5,632.6 L1456.3,634.3 L1457.1,636.0 L1458.0,637.8 L1458.9,639.7 L1459.8,641.6 L1460.8,643.6 L1461.9,645.5 L1463.2,647.5 L1464.5,649.5 L1466.0,651.4 L1467.7,653.4 L1469.4,654.8 L1471.1,656.1 L1472.9,657.4 L1474.7,658.7 L1476.5,659.9 L1478.3,661.1 L1480.1,662.2 L1482.0,663.3 L1483.8,664.4 L1485.7,665.4 L1487.5,666.4 L1489.5,667.4 L1491.3,668.3 L1493.2,669.2 L1495.1,670.1 L1497.0,670.9 L1498.9,671.8 L1500.7,672.6 L1502.6,673.4 L1504.5,674.2 L1506.4,675.0 L1508.4,675.7 L1510.3,676.5 L1512.2,677.2 L1514.2,677.9 L1516.1,678.6 L1518.1,679.2 L1520.1,679.8 L1522.1,680.4 L1524.1,681.0 L1526.0,681.6 L1528.1,682.1 L1530.1,682.6 L1532.1,683.1 L1534.2,683.5 L1536.3,683.9 L1538.3,684.3 L1540.3,684.6 L1542.4,684.9 L1544.4,685.2 L1546.4,685.4 L1548.5,685.6 L1550.5,685.8 L1552.5,686.0 L1554.5,686.2 L1556.5,686.3 L1558.5,686.5 L1560.5,686.7 L1562.5,686.8 L1564.4,687.0 L1566.4,687.2 L1568.4,687.4 L1570.4,687.7 L1572.4,687.9 L1574.4,688.1 L1576.4,688.3 L1578.4,688.5 L1580.4,688.7 L1582.4,688.8 L1584.4,689.0 L1586.4,689.1 L1588.5,689.2 L1590.5,689.3 L1592.5,689.4 L1594.6,689.4 L1596.6,689.4 L1598.6,689.5 L1600.6,689.5 L1602.6,689.5 L1604.6,689.5 L1606.6,689.6 L1608.6,689.6 L1610.6,689.6 L1612.6,689.6 L1614.6,689.6 L1616.6,689.6 L1618.6,689.6 L1620.6,689.6 L1622.6,689.6 L1624.6,689.6 L1626.6,689.6 L1628.6,689.6 L1630.6,689.6 L1632.6,689.6 L1634.6,689.6 L1636.6,689.6 L1638.6,689.6 L1640.6,689.6 L1642.6,689.5 L1644.6,689.5 L1646.6,689.5 L1648.6,689.5 L1650.6,689.5 L1652.6,689.5 L1654.6,689.4 L1656.6,689.4 L1658.6,689.4 L1660.6,689.4 L1662.6,689.3 L1664.6,689.3 L1666.6,689.3 L1668.6,689.3 L1670.6,689.3 L1672.6,689.2 L1674.6,689.2 L1676.6,689.2 L1678.6,689.2 L1680.6,689.2 L1682.6,689.1 L1684.6,689.1 L1686.6,689.1 L1688.6,689.1 L1690.6,689.1 L1692.6,689.1 L1694.6,689.0 L1696.6,689.0 L1698.6,689.0 L1700.6,689.0 L1702.6,689.0 L1704.6,689.1 L1706.6,689.1 L1708.6,689.1 L1710.6,689.2 L1712.6,689.2 L1714.6,689.2 L1716.6,689.2 L1718.6,689.3 L1720.6,689.3 L1722.6,689.3 L1724.6,689.4 L1726.6,689.4 L1728.6,689.4 L1730.6,689.4 L1732.6,689.5 L1734.6,689.5 L1736.6,689.5 L1738.6,689.5 L1740.6,689.6 L1742.6,689.6 L1744.6,689.6 L1746.6,689.7 L1748.6,689.7 L1750.6,689.7 L1752.6,689.7 L1754.6,689.8 L1756.6,689.8 L1758.6,689.8 L1760.6,689.9 L1762.6,689.9 L1764.6,689.9 L1766.6,689.9 L1768.6,690.0 L1770.6,690.0 L1772.6,690.0 L1774.6,690.0 L1776.6,690.1 L1778.6,690.1 L1780.6,690.1 L1782.6,690.2 L1784.6,690.2 L1786.6,690.2 L1788.6,690.2 L1790.6,690.3 L1792.6,690.3 L1794.6,690.3 L1796.6,690.4 L1798.6,690.4 L1800.6,690.4 L1802.6,690.4 L1804.6,690.5 L1806.6,690.5 L1808.6,690.5 L1810.6,690.5 L1812.6,690.6 L1814.6,690.6 L1816.6,690.6 L1818.6,690.7 L1820.6,690.7 L1822.6,690.7 L1824.6,690.7 L1826.6,690.8 L1828.6,690.8 L1830.6,690.8 L1832.6,690.8 L1834.6,690.9 L1836.6,690.9 L1838.6,690.9 L1840.6,691.0 L1842.6,691.0 L1844.6,691.0 L1846.6,691.0 L1848.6,691.1 L1850.6,691.1 L1852.6,691.1 L1854.6,691.1 L1856.6,691.2 L1858.6,691.2 L1860.6,691.2 L1862.6,691.3 L1864.6,691.3 L1866.6,691.3 L1868.6,691.3 L1870.6,691.4 L1872.6,691.4 L1874.6,691.4 L1876.6,691.5 L1878.6,691.5" fill="none" stroke="#7d0000" stroke-width="41" clip-path="url(#crd)"/><path d="M916.0,235.5 C960.7,234.8 1005.3,234.0 1050.0,233.5 C1093.3,233.0 1136.7,232.0 1180.0,232.5 C1191.7,232.6 1203.4,233.8 1215.0,235.5 C1227.1,237.3 1239.3,239.4 1251.0,243.0 C1264.7,247.2 1278.0,252.8 1291.0,259.0 C1306.2,266.2 1321.4,273.7 1335.4,283.0 C1345.2,289.5 1353.6,297.9 1362.0,306.0 C1370.1,313.8 1377.7,322.2 1385.0,330.8 C1391.3,338.2 1397.7,345.5 1402.7,353.8 C1407.8,362.2 1411.5,371.3 1415.0,380.4 C1417.7,387.4 1419.7,394.7 1421.2,402.0 C1424.7,418.9 1427.8,435.9 1430.0,453.0 C1432.1,469.6 1433.0,486.3 1434.0,503.0 C1434.8,517.0 1434.5,531.0 1435.5,545.0 C1436.4,557.6 1437.1,570.4 1439.5,582.8 C1441.0,590.6 1443.6,598.3 1447.0,605.5 C1450.8,613.6 1456.2,620.8 1461.0,628.3 C1465.0,634.5 1468.2,641.4 1473.5,646.5 C1480.5,653.3 1488.8,658.8 1497.4,663.5 C1508.3,669.5 1519.6,674.7 1531.5,678.3 C1542.6,681.6 1554.3,682.4 1565.7,684.0 C1575.4,685.4 1585.2,687.0 1595.0,687.4 C1630.0,688.7 1665.0,688.5 1700.0,689.0 C1760.0,689.9 1820.0,690.7 1880.0,691.5" fill="none" stroke="#00ff00" stroke-width="10.5" clip-path="url(#cg)"/><path d="M916.0,235.5 C960.7,234.8 1005.3,234.0 1050.0,233.5 C1093.3,233.0 1136.7,232.0 1180.0,232.5 C1191.7,232.6 1203.4,233.8 1215.0,235.5 C1227.1,237.3 1239.3,239.4 1251.0,243.0 C1264.7,247.2 1278.0,252.8 1291.0,259.0 C1306.2,266.2 1321.4,273.7 1335.4,283.0 C1345.2,289.5 1353.6,297.9 1362.0,306.0 C1370.1,313.8 1377.7,322.2 1385.0,330.8 C1391.3,338.2 1397.7,345.5 1402.7,353.8 C1407.8,362.2 1411.5,371.3 1415.0,380.4 C1417.7,387.4 1419.7,394.7 1421.2,402.0 C1424.7,418.9 1427.8,435.9 1430.0,453.0 C1432.1,469.6 1433.0,486.3 1434.0,503.0 C1434.8,517.0 1434.5,531.0 1435.5,545.0 C1436.4,557.6 1437.1,570.4 1439.5,582.8 C1441.0,590.6 1443.6,598.3 1447.0,605.5 C1450.8,613.6 1456.2,620.8 1461.0,628.3 C1465.0,634.5 1468.2,641.4 1473.5,646.5 C1480.5,653.3 1488.8,658.8 1497.4,663.5 C1508.3,669.5 1519.6,674.7 1531.5,678.3 C1542.6,681.6 1554.3,682.4 1565.7,684.0 C1575.4,685.4 1585.2,687.0 1595.0,687.4 C1630.0,688.7 1665.0,688.5 1700.0,689.0 C1760.0,689.9 1820.0,690.7 1880.0,691.5" fill="none" stroke="#ff0000" stroke-width="10.5" clip-path="url(#crd)"/><path d="M916.0,235.5 C960.7,234.8 1005.3,234.0 1050.0,233.5 C1093.3,233.0 1136.7,232.0 1180.0,232.5 C1191.7,232.6 1203.4,233.8 1215.0,235.5 C1227.1,237.3 1239.3,239.4 1251.0,243.0 C1264.7,247.2 1278.0,252.8 1291.0,259.0 C1306.2,266.2 1321.4,273.7 1335.4,283.0 C1345.2,289.5 1353.6,297.9 1362.0,306.0 C1370.1,313.8 1377.7,322.2 1385.0,330.8 C1391.3,338.2 1397.7,345.5 1402.7,353.8 C1407.8,362.2 1411.5,371.3 1415.0,380.4 C1417.7,387.4 1419.7,394.7 1421.2,402.0 C1424.7,418.9 1427.8,435.9 1430.0,453.0 C1432.1,469.6 1433.0,486.3 1434.0,503.0 C1434.8,517.0 1434.5,531.0 1435.5,545.0 C1436.4,557.6 1437.1,570.4 1439.5,582.8 C1441.0,590.6 1443.6,598.3 1447.0,605.5 C1450.8,613.6 1456.2,620.8 1461.0,628.3 C1465.0,634.5 1468.2,641.4 1473.5,646.5 C1480.5,653.3 1488.8,658.8 1497.4,663.5 C1508.3,669.5 1519.6,674.7 1531.5,678.3 C1542.6,681.6 1554.3,682.4 1565.7,684.0 C1575.4,685.4 1585.2,687.0 1595.0,687.4 C1630.0,688.7 1665.0,688.5 1700.0,689.0 C1760.0,689.9 1820.0,690.7 1880.0,691.5" fill="none" stroke="url(#grd)" stroke-width="10.5" clip-path="url(#cmid)"/><g fill="none" stroke="#00f000" stroke-width="1"><rect x="-29" y="-25.5" width="129" height="51" transform="translate(916.0,235.5) rotate(0.00)"/><rect x="-29" y="-25.5" width="129" height="51" transform="translate(942.0,235.1) rotate(-0.90)"/><rect x="-29" y="-25.5" width="129" height="51" transform="translate(969.0,234.7) rotate(-0.92)"/><rect x="-29" y="-25.5" width="129" height="51" transform="translate(995.0,234.3) rotate(-0.90)"/><rect x="-29" y="-25.5" width="129" height="51" transform="translate(1022.0,233.9) rotate(-0.82)"/><rect x="-29" y="-25.5" width="129" height="51" transform="translate(1048.0,233.5) rotate(-0.70)"/><rect x="-29" y="-25.5" width="129" height="51" transform="translate(1074.0,233.2) rotate(-0.79)"/><rect x="-29" y="-25.5" width="129" height="51" transform="translate(1101.0,232.8) rotate(-0.82)"/><rect x="-29" y="-25.5" width="129" height="51" transform="translate(1127.0,232.5) rotate(-0.62)"/><rect x="-29" y="-25.5" width="129" height="51" transform="translate(1154.0,232.4) rotate(-0.18)"/><rect x="-29" y="-25.5" width="129" height="51" transform="translate(1180.0,232.5) rotate(0.47)"/><rect x="-29" y="-25.5" width="129" height="51" transform="translate(1205.9,234.3) rotate(5.37)"/><rect x="-29" y="-25.5" width="129" height="51" transform="translate(1232.6,238.5) rotate(9.73)"/><rect x="-29" y="-25.5" width="129" height="51" transform="translate(1257.7,245.2) rotate(17.08)"/><rect x="-29" y="-25.5" width="129" height="51" transform="translate(1282.7,255.2) rotate(23.04)"/><rect x="-29" y="-25.5" width="129" height="51" transform="translate(1306.2,266.4) rotate(25.99)"/><rect x="-29" y="-25.5" width="129" height="51" transform="translate(1329.0,278.9) rotate(29.86)"/><rect x="-29" y="-25.5" width="129" height="51" transform="translate(1350.5,295.1) rotate(40.06)"/><rect x="-29" y="-25.5" width="129" height="51" transform="translate(1369.2,313.2) rotate(44.67)"/><rect x="-29" y="-25.5" width="129" height="51" transform="translate(1387.2,333.3) rotate(49.20)"/><rect x="-29" y="-25.5" width="129" height="51" transform="translate(1402.8,354.0) rotate(54.81)"/><rect x="-29" y="-25.5" width="129" height="51" transform="translate(1413.9,377.5) rotate(67.19)"/><rect x="-29" y="-25.5" width="129" height="51" transform="translate(1421.5,403.4) rotate(76.36)"/><rect x="-29" y="-25.5" width="129" height="51" transform="translate(1426.4,428.9) rotate(79.60)"/><rect x="-29" y="-25.5" width="129" height="51" transform="translate(1430.3,455.6) rotate(82.25)"/><rect x="-29" y="-25.5" width="129" height="51" transform="translate(1432.7,481.5) rotate(85.51)"/><rect x="-29" y="-25.5" width="129" height="51" transform="translate(1434.2,507.5) rotate(86.61)"/><rect x="-29" y="-25.5" width="129" height="51" transform="translate(1435.0,534.5) rotate(88.64)"/><rect x="-29" y="-25.5" width="129" height="51" transform="translate(1436.6,560.4) rotate(85.88)"/><rect x="-29" y="-25.5" width="129" height="51" transform="translate(1440.4,587.1) rotate(80.18)"/><rect x="-29" y="-25.5" width="129" height="51" transform="translate(1450.0,611.2) rotate(64.89)"/><rect x="-29" y="-25.5" width="129" height="51" transform="translate(1464.0,633.1) rotate(56.96)"/><rect x="-29" y="-25.5" width="129" height="51" transform="translate(1481.5,653.3) rotate(41.60)"/><rect x="-29" y="-25.5" width="129" height="51" transform="translate(1503.7,666.8) rotate(28.80)"/><rect x="-29" y="-25.5" width="129" height="51" transform="translate(1528.5,677.4) rotate(20.86)"/><rect x="-29" y="-25.5" width="129" height="51" transform="translate(1554.0,682.5) rotate(8.42)"/><rect x="-29" y="-25.5" width="129" height="51" transform="translate(1579.7,686.0) rotate(8.29)"/><rect x="-29" y="-25.5" width="129" height="51" transform="translate(1606.6,687.8) rotate(1.93)"/><rect x="-29" y="-25.5" width="129" height="51" transform="translate(1632.6,688.3) rotate(1.00)"/><rect x="-29" y="-25.5" width="129" height="51" transform="translate(1659.6,688.6) rotate(0.52)"/><rect x="-29" y="-25.5" width="129" height="51" transform="translate(1685.6,688.8) rotate(0.50)"/><rect x="-29" y="-25.5" width="129" height="51" transform="translate(1711.6,689.2) rotate(0.82)"/><rect x="-29" y="-25.5" width="129" height="51" transform="translate(1738.6,689.5) rotate(0.81)"/><rect x="-29" y="-25.5" width="129" height="51" transform="translate(1764.6,689.9) rotate(0.80)"/><rect x="-29" y="-25.5" width="129" height="51" transform="translate(1791.6,690.3) rotate(0.79)"/><rect x="-29" y="-25.5" width="129" height="51" transform="translate(1817.6,690.6) rotate(0.79)"/><rect x="-29" y="-25.5" width="129" height="51" transform="translate(1843.6,691.0) rotate(0.79)"/><rect x="-29" y="-25.5" width="129" height="51" transform="translate(1870.6,691.4) rotate(0.79)"/></g><path d="M756,196.5 L1872,194.8" fill="none" stroke="#858585" stroke-width="2.4"/><path d="M756,275 L1872,273" fill="none" stroke="#858585" stroke-width="2.4"/><path d="M756,354 L1872,352.5" fill="none" stroke="#858585" stroke-width="2.4"/><path d="M1640.0,195.0 C1613.3,197.7 1586.1,197.0 1560.0,203.0 C1529.7,210.0 1499.9,220.1 1472.0,233.6 C1451.2,243.7 1432.6,258.3 1415.0,273.3 C1403.4,283.2 1394.2,295.8 1385.0,308.0 C1375.2,321.1 1366.5,334.9 1358.3,349.0 C1351.5,360.8 1344.8,372.8 1340.0,385.5 C1335.2,398.2 1333.1,411.8 1329.7,425.0 C1327.0,435.7 1323.4,446.1 1321.6,457.0 C1320.3,464.6 1320.9,472.3 1320.5,480.0" fill="none" stroke="#858585" stroke-width="2.4"/><path d="M1640.0,273.0 C1613.3,276.0 1585.9,274.8 1560.0,282.0 C1535.2,288.9 1511.9,301.2 1490.0,314.7 C1475.4,323.7 1462.3,335.7 1451.4,349.0 C1438.7,364.4 1429.3,382.3 1420.0,400.0 C1414.2,411.0 1409.9,422.9 1406.4,434.8 C1403.5,444.6 1402.2,454.8 1400.9,465.0 C1399.8,473.3 1399.9,481.7 1399.4,490.0" fill="none" stroke="#858585" stroke-width="2.4"/><path d="M1185.0,353.8 C1196.8,354.9 1209.0,354.1 1220.5,357.2 C1234.7,361.0 1248.2,367.3 1261.0,374.4 C1271.9,380.5 1282.2,387.9 1291.2,396.6 C1298.5,403.6 1304.7,412.0 1309.4,421.0 C1313.6,429.1 1315.4,438.3 1317.5,447.2 C1318.9,453.2 1319.4,459.3 1320.0,465.4 C1320.4,470.2 1320.3,475.1 1320.5,480.0" fill="none" stroke="#858585" stroke-width="2.4"/><path d="M1600.0,352.6 C1580.0,357.7 1557.4,356.9 1540.0,368.0 C1520.5,380.4 1507.6,401.3 1494.0,420.0 C1487.9,428.4 1484.7,438.8 1481.5,448.7 C1479.1,456.2 1478.2,464.1 1477.5,472.0 C1476.8,479.6 1477.5,487.3 1477.5,495.0" fill="none" stroke="#858585" stroke-width="2.4"/><path d="M1323.0,791.0 C1325.0,778.2 1324.6,764.9 1329.0,752.7 C1333.6,740.0 1340.8,728.1 1349.4,717.7 C1359.6,705.4 1372.1,695.0 1385.0,685.5 C1401.3,673.5 1418.3,662.3 1436.6,653.7 C1449.3,647.8 1463.4,645.5 1477.0,642.5 C1488.1,640.0 1499.3,638.0 1510.6,637.3 C1529.7,636.1 1548.9,636.9 1568.0,637.0 C1629.3,637.4 1690.8,635.2 1752.0,639.0 C1772.0,640.2 1791.3,646.9 1810.7,652.0 C1822.6,655.1 1834.9,657.7 1845.7,663.6 C1858.4,670.5 1868.6,681.2 1880.0,690.0" fill="none" stroke="#858585" stroke-width="2.4"/><path d="M1402.0,791.0 C1412.5,780.7 1421.0,767.8 1433.5,760.0 C1446.3,752.0 1461.3,748.0 1476.0,744.7 C1492.0,741.1 1508.6,740.5 1525.0,739.3 C1537.5,738.4 1550.1,738.2 1562.6,738.5 C1629.7,740.1 1697.0,739.7 1764.0,745.0 C1782.0,746.4 1799.5,752.3 1816.5,758.5 C1827.9,762.7 1838.1,769.8 1848.6,776.0 C1856.6,780.7 1864.2,786.0 1872.0,791.0" fill="none" stroke="#858585" stroke-width="2.4"/><path d="M1320.5,476 L1320.5,791 M1399.4,480 L1399.4,791 M1477.5,490 L1477.8,791" fill="none" stroke="#858585" stroke-width="2.4"/><polygon points="1179,199 1192,199 1192,273 1179,273" fill="#808080"/><polygon points="1631,274 1643,274 1644,352 1632,352" fill="#808080"/><polygon points="1323,481.5 1398,481 1398,493.5 1323,494" fill="#808080"/><path d="M797.0,196.0 C928.0,196.0 1059.0,195.5 1190.0,196.0 C1200.0,196.0 1210.0,196.5 1220.0,197.5 C1230.1,198.5 1240.0,200.4 1250.0,202.1 C1257.6,203.4 1265.2,204.4 1272.7,206.3 C1280.4,208.2 1288.0,210.9 1295.5,213.5 C1303.1,216.1 1310.8,218.6 1318.2,221.8 C1326.5,225.4 1334.8,229.2 1342.7,233.6 C1348.9,237.0 1354.6,241.1 1360.4,245.1 C1366.4,249.3 1372.4,253.7 1378.1,258.4 C1383.1,262.5 1387.7,267.0 1392.3,271.6 C1396.8,276.0 1401.1,280.6 1405.2,285.3 C1410.4,291.2 1415.5,297.3 1420.3,303.5 C1425.6,310.4 1431.0,317.3 1435.5,324.7 C1440.8,333.5 1445.5,342.7 1449.7,352.0 C1454.3,362.1 1458.7,372.4 1462.0,383.0 C1465.8,395.4 1468.6,408.2 1471.0,421.0 C1472.8,430.6 1473.8,440.3 1474.5,450.0 C1475.8,468.3 1476.2,486.7 1477.0,505.0 C1477.9,527.3 1476.5,549.9 1479.5,572.0 C1480.8,581.2 1486.3,589.3 1489.7,598.0 L1489.7,598.0 L1510.6,623.2 L1534.6,633.4 L1566.2,637.1 L1600.0,637.8 L1872.0,642.0" fill="none" stroke="#0096d6" stroke-width="8" stroke-linejoin="round"/><path d="M797.0,196.0 C928.0,196.0 1059.0,195.5 1190.0,196.0 C1200.0,196.0 1210.0,196.5 1220.0,197.5 C1230.1,198.5 1240.0,200.4 1250.0,202.1 C1257.6,203.4 1265.2,204.4 1272.7,206.3 C1280.4,208.2 1288.0,210.9 1295.5,213.5 C1303.1,216.1 1310.8,218.6 1318.2,221.8 C1326.5,225.4 1334.8,229.2 1342.7,233.6 C1348.9,237.0 1354.6,241.1 1360.4,245.1 C1366.4,249.3 1372.4,253.7 1378.1,258.4 C1383.1,262.5 1387.7,267.0 1392.3,271.6 C1396.8,276.0 1401.1,280.6 1405.2,285.3 C1410.4,291.2 1415.5,297.3 1420.3,303.5 C1425.6,310.4 1431.0,317.3 1435.5,324.7 C1440.8,333.5 1445.5,342.7 1449.7,352.0 C1454.3,362.1 1458.7,372.4 1462.0,383.0 C1465.8,395.4 1468.6,408.2 1471.0,421.0 C1472.8,430.6 1473.8,440.3 1474.5,450.0 C1475.8,468.3 1476.2,486.7 1477.0,505.0 C1477.9,527.3 1476.5,549.9 1479.5,572.0 C1480.8,581.2 1486.3,589.3 1489.7,598.0 L1489.7,598.0 L1510.6,623.2 L1534.6,633.4 L1566.2,637.1 L1600.0,637.8 L1872.0,642.0" fill="none" stroke="#858585" stroke-width="2.6" stroke-linejoin="round"/><path d="M797.0,275.0 C928.0,275.0 1059.0,273.5 1190.0,275.0 C1206.8,275.2 1223.6,276.9 1240.0,280.2 C1253.9,283.0 1267.1,288.8 1280.5,293.4 C1287.1,295.6 1293.8,297.7 1300.0,300.7 C1312.1,306.6 1324.8,311.8 1335.4,320.2 C1345.2,328.0 1352.9,338.3 1360.2,348.5 C1368.3,359.7 1375.2,371.6 1381.4,383.9 C1384.8,390.6 1387.6,397.7 1389.0,405.0 C1391.8,419.8 1392.6,435.0 1394.0,450.0 C1395.6,468.3 1397.0,486.6 1398.0,505.0 C1399.7,536.6 1400.2,568.4 1402.0,600.0 C1402.7,613.4 1404.1,626.7 1405.5,640.0 C1406.5,649.1 1408.0,658.2 1409.3,667.3 L1409.3,667.3 L1423.7,699.2 L1448.0,718.1 L1479.0,731.0 L1525.0,734.8 L1872.0,745.0" fill="none" stroke="#0096d6" stroke-width="8" stroke-linejoin="round"/><path d="M797.0,275.0 C928.0,275.0 1059.0,273.5 1190.0,275.0 C1206.8,275.2 1223.6,276.9 1240.0,280.2 C1253.9,283.0 1267.1,288.8 1280.5,293.4 C1287.1,295.6 1293.8,297.7 1300.0,300.7 C1312.1,306.6 1324.8,311.8 1335.4,320.2 C1345.2,328.0 1352.9,338.3 1360.2,348.5 C1368.3,359.7 1375.2,371.6 1381.4,383.9 C1384.8,390.6 1387.6,397.7 1389.0,405.0 C1391.8,419.8 1392.6,435.0 1394.0,450.0 C1395.6,468.3 1397.0,486.6 1398.0,505.0 C1399.7,536.6 1400.2,568.4 1402.0,600.0 C1402.7,613.4 1404.1,626.7 1405.5,640.0 C1406.5,649.1 1408.0,658.2 1409.3,667.3 L1409.3,667.3 L1423.7,699.2 L1448.0,718.1 L1479.0,731.0 L1525.0,734.8 L1872.0,745.0" fill="none" stroke="#858585" stroke-width="2.6" stroke-linejoin="round"/><polygon points="1410.4,225.9 1410.4,241.7 1435.7,233.8" fill="rgb(164, 164, 164)" fill-opacity="0.45"/><polygon points="1522.6,225.9 1522.6,241.7 1549.5,233.8" fill="rgb(175, 175, 175)" fill-opacity="0.45"/><polygon points="1532,241.7 1535,257.5 1559,246.4" fill="rgb(151, 151, 182)" fill-opacity="0.45"/><polygon points="1440.4,295.4 1465.7,289 1451.5,309.6" fill="rgb(151, 151, 182)" fill-opacity="0.45"/><polygon points="1272.4,313.6 1298.7,305.5 1298.7,320.7" fill="rgb(164, 164, 164)" fill-opacity="0.45"/><polygon points="1250.8,328.6 1277.7,325.4 1274.5,339.6" fill="rgb(155, 175, 175)" fill-opacity="0.45"/><polygon points="1499,312.8 1524,306.4 1524,320.7" fill="rgb(175, 175, 175)" fill-opacity="0.45"/><polygon points="1521,346 1535,325.4 1544.7,336.5" fill="rgb(155, 175, 175)" fill-opacity="0.45"/><polygon points="1611,314 1630,308 1630,320.7" fill="rgb(178, 200, 200)" fill-opacity="0.45"/><polygon points="1321.4,378.4 1346.4,391.4 1334,399.8" fill="rgb(155, 175, 175)" fill-opacity="0.45"/><polygon points="1353.4,479 1354.8,462.3 1363,479" fill="rgb(155, 175, 175)" fill-opacity="0.45"/><polygon points="1357,479 1366,462 1367,479" fill="rgb(155, 175, 175)" fill-opacity="0.45"/><polygon points="1401,721.1 1428.2,718.1 1407,735.6" fill="rgb(151, 151, 182)" fill-opacity="0.45"/><polygon points="1367,791 1376,782 1378,791" fill="rgb(151, 151, 182)" fill-opacity="0.45"/><polygon points="1192,230 1192,242 1210,236" fill="rgb(176, 176, 176)" fill-opacity="0.45"/><polygon points="1363,308 1374.5,300.5 1381.6,324" fill="rgb(150, 150, 150)" fill-opacity="0.45"/><polygon points="1385,313.4 1410.8,305.8 1410.8,318.7" fill="rgb(150, 150, 150)" fill-opacity="0.45"/><polygon points="1420,352 1440,343 1437,362" fill="rgb(150, 150, 150)" fill-opacity="0.45"/><polygon points="1430.2,551.4 1446,549 1441.6,575.6" fill="rgb(150, 150, 150)" fill-opacity="0.45"/><polygon points="1443,632 1454,622 1454.5,640" fill="rgb(190, 190, 190)" fill-opacity="0.45"/><polygon points="1487,685 1510,691 1490,697" fill="rgb(190, 190, 190)" fill-opacity="0.45"/><polygon points="1415,389 1429.5,386.5 1423,407" fill="rgb(150, 150, 150)" fill-opacity="0.45"/><polygon points="1459,396 1474,397 1461,418" fill="rgb(151, 151, 182)" fill-opacity="0.45"/><polygon points="1381,378.4 1397,366.3 1389,390.6" fill="rgb(151, 151, 182)" fill-opacity="0.45"/><g><path d="M1062,205.5 H1158 Q1178,205.5 1178,230.75 Q1178,256 1158,256 H1062 Q1050,256 1050,230.75 Q1050,205.5 1062,205.5 Z" fill="#dcdcdc" fill-opacity="0.42" stroke="#c8c8c8" stroke-opacity="0.8" stroke-width="1.4"/><path d="M1064,209 H1156 Q1174,209 1174,230.75 Q1174,252.5 1156,252.5 H1064 Q1054,252.5 1054,230.75 Q1054,209 1064,209 Z" fill="none" stroke="#b0b0b0" stroke-opacity="0.5" stroke-width="1"/><rect x="1122" y="210" width="24" height="41" fill="#000" fill-opacity="0.22"/><rect x="1055" y="212" width="14" height="37" rx="5" fill="#000" fill-opacity="0.15"/><rect x="1070" y="208" width="50" height="8" fill="#000" fill-opacity="0.22"/><rect x="1070" y="246" width="50" height="7" fill="#000" fill-opacity="0.18"/><circle cx="1163" cy="214" r="1" fill="#e05030"/><circle cx="1162" cy="249" r="1" fill="#e05030"/></g><polygon points="1499.8,591 1566,598 1568,791 1499.8,791" fill="#a8b4a8" fill-opacity="0.17"/></svg></body></html>
